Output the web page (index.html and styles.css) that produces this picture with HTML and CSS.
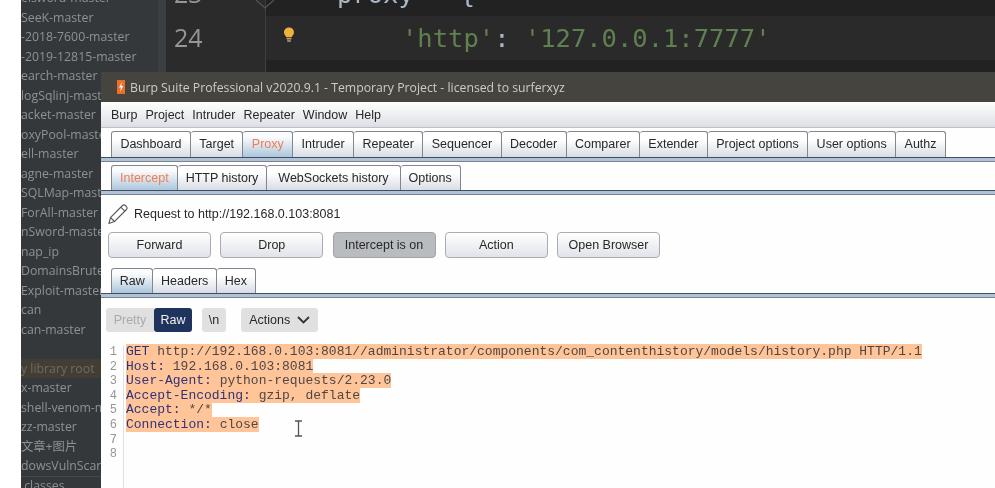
FILE: index.html
```html
<!DOCTYPE html>
<html>
<head>
<meta charset="utf-8">
<title>Burp Suite Professional</title>
<link rel="stylesheet" href="styles.css">
</head>
<body>

<div class='desktop'>
  <div class='ide'>
    <div class='strip'></div>
    <div class='tree'>
      <div class='row'>elsword-master</div>
      <div class='row'>SeeK-master</div>
      <div class='row'>-2018-7600-master</div>
      <div class='row'>-2019-12815-master</div>
      <div class='row'>earch-master</div>
      <div class='row'>logSqlinj-master</div>
      <div class='row'>acket-master</div>
      <div class='row'>oxyPool-master</div>
      <div class='row'>ell-master</div>
      <div class='row'>agne-master</div>
      <div class='row'>SQLMap-master</div>
      <div class='row'>ForAll-master</div>
      <div class='row'>nSword-master</div>
      <div class='row'>nap_ip</div>
      <div class='row'>DomainsBrute</div>
      <div class='row'>Exploit-master</div>
      <div class='row'>can</div>
      <div class='row'>can-master</div>
      <div class='row'></div>
      <div class='row root'>y library root</div>
      <div class='row'>x-master</div>
      <div class='row'>shell-venom-master</div>
      <div class='row'>zz-master</div>
      <div class='row'>文章+图片</div>
      <div class='row sep'>dowsVulnScan</div>
      <div class='row'>.classes</div>
    </div>
    <div class='splitter'></div>
    <div class='gutter'>
      <div class='num'>23</div>
      <div class='num'>24</div>
    </div>
    <div class='code'>
      <div class='line'><span class='var'>proxy = {</span></div>
      <div class='line current'><span class='str'>'http'</span><span class='var'>:</span> <span class='str'>'127.0.0.1:7777'</span></div>
      <div class='line'><span class='var'>}</span></div>
    </div>
  </div>

  <svg class='fold' width='20' height='9' viewBox='0 0 20 9'>
    <path d='M1 0L10 8L19 0' fill='none' stroke='#555' stroke-width='1.2'/>
  </svg>
  <svg class='bulb' width='12' height='16' viewBox='0 0 12 16'>
    <path d='M6 0.5C2.8 0.5 1 2.8 1 5.2C1 7.4 2.6 8.4 3.4 10.2H8.6C9.4 8.4 11 7.4 11 5.2C11 2.8 9.2 0.5 6 0.5Z' fill='#f0b23a'/>
    <path d='M3.6 11.8H8.4M4.2 14H7.8' stroke='#b9a27a' stroke-width='1.4'/>
  </svg>

  <div class='burp'>
    <div class='title'>
      <svg width='8' height='14' viewBox='0 0 8 14'>
        <rect width='8' height='14' fill='#e8702a'/>
        <path d='M5 2L2 7.5H4L3 12L6.2 6H4.2Z' fill='#fff'/>
      </svg>
      <span>Burp Suite Professional v2020.9.1 - Temporary Project - licensed to surferxyz</span>
    </div>
    <div class='menu'>
      <span>Burp</span><span>Project</span><span>Intruder</span><span>Repeater</span><span>Window</span><span>Help</span>
    </div>

    <div class='tabs main'>
      <div class='tab'>Dashboard</div>
      <div class='tab'>Target</div>
      <div class='tab on'>Proxy</div>
      <div class='tab'>Intruder</div>
      <div class='tab'>Repeater</div>
      <div class='tab'>Sequencer</div>
      <div class='tab'>Decoder</div>
      <div class='tab'>Comparer</div>
      <div class='tab'>Extender</div>
      <div class='tab'>Project options</div>
      <div class='tab'>User options</div>
      <div class='tab'>Authz</div>
    </div>
    <div class='tabs sub'>
      <div class='tab on'>Intercept</div>
      <div class='tab'>HTTP history</div>
      <div class='tab ws'>WebSockets history</div>
      <div class='tab'>Options</div>
    </div>

    <div class='request'>
      <svg width='22' height='22' viewBox='0 0 22 22'>
        <path d='M2 20.5L3.5 14.5L15.5 2.5C16.3 1.7 17.5 1.7 18.3 2.5L19.5 3.7C20.3 4.5 20.3 5.7 19.5 6.5L7.5 18.5L2 20.5ZM3.5 14.5L7.5 18.5M13.8 4.2L17.8 8.2' fill='none' stroke='#55585c' stroke-width='1.1'/>
      </svg>
      <span>Request to http://192.168.0.103:8081</span>
    </div>
    <div class='buttons'>
      <div class='btn'>Forward</div>
      <div class='btn'>Drop</div>
      <div class='btn pressed'>Intercept is on</div>
      <div class='btn'>Action</div>
      <div class='btn'>Open Browser</div>
    </div>

    <div class='tabs view'>
      <div class='tab on dark'>Raw</div>
      <div class='tab'>Headers</div>
      <div class='tab'>Hex</div>
    </div>

    <div class='toolbar'>
      <div class='toggle'>
        <div class='pill off'>Pretty</div>
        <div class='pill sel'>Raw</div>
      </div>
      <div class='pill nl'>\n</div>
      <div class='pill act'>Actions
        <svg width='13' height='8' viewBox='0 0 13 8'><path d='M1 1L6.5 6.5L12 1' fill='none' stroke='#333' stroke-width='1.8'/></svg>
      </div>
    </div>

    <div class='editor'>
      <div class='nums'>
        <div>1</div><div>2</div><div>3</div><div>4</div><div>5</div><div>6</div><div>7</div><div>8</div>
      </div>
      <div class='text'>
        <div><mark><b>GET</b> http://192.168.0.103:8081//administrator/components/com_contenthistory/models/history.php HTTP/1.1</mark></div>
        <div><mark><b>Host:</b> 192.168.0.103:8081</mark></div>
        <div><mark><b>User-Agent:</b> python-requests/2.23.0</mark></div>
        <div><mark><b>Accept-Encoding:</b> gzip, deflate</mark></div>
        <div><mark><b>Accept:</b> */*</mark></div>
        <div><mark><b>Connection:</b> close</mark></div>
      </div>
    </div>
  </div>

  <svg class='ibeam' width='9' height='17' viewBox='0 0 9 17'>
    <path d='M1 1H8M4.5 1V16M1 16H8' fill='none' stroke='#555' stroke-width='1.3'/>
  </svg>
</div>

</body>
</html>
```

FILE: styles.css
```css
html, body{
  margin:0px;
  padding:0px;
}
body{
  width:995px;
  height:488px;
  overflow:hidden;
  background:rgb(255,255,255);
}

.desktop{
  position:relative;
  width:995px;
  height:488px;
  overflow:hidden;
  filter:blur(0.5px);
}

/* ide behind the burp window */
.ide{
  display:flex;
  height:488px;
  background:rgb(34,34,34);
}
.strip{
  width:21px;
  background:rgb(255,255,255);
}
.tree{
  width:137px;
  margin-top:-12px;
  overflow:hidden;
  background:rgb(52,56,59);

  font-family:"Open Sans", "Noto Sans CJK SC", sans-serif;
  font-size:12.3px;
  color:rgb(142,146,148);
}
.tree .row{
  height:19.5px;
  line-height:19.5px;
  white-space:nowrap;
}
.tree .root{
  background:rgb(66,62,54);
  color:rgb(112,108,96);
}
.tree .sep{
  border-bottom:1px solid rgb(70,74,76);
  margin-bottom:-1px;
}
.splitter{
  width:8px;
  background:rgb(60,63,65);
}
.gutter{
  width:99px;
  border-right:1px solid rgb(62,62,62);
  margin-top:-29px;
  background:rgb(43,43,43);

  font-family:"Open Sans", sans-serif;
  font-size:25px;
  color:rgb(150,150,150);
}
.gutter .num{
  height:44px;
  line-height:44px;
  padding-left:8px;
}
.code{
  flex:1;
  margin-top:-28px;

  font-family:"DejaVu Sans Mono", monospace;
  font-size:25.5px;
}
.code .line{
  height:44px;
  line-height:44px;
  padding-left:71px;
  white-space:pre;
}
.code .current{
  padding-left:136px;
  background:rgb(42,42,42);
}
.var{
  color:rgb(169,183,198);
}
.str{
  color:rgb(96,128,80);
}
.fold{
  position:absolute;
  left:255px;
  top:0px;
}
.bulb{
  position:absolute;
  left:283px;
  top:27px;
}

/* burp window */
.burp{
  position:absolute;
  left:101px;
  top:72px;
  width:894px;
  height:416px;
  background:rgb(254,254,254);

  font-family:"Liberation Sans", sans-serif;
  font-size:12.5px;
  color:rgb(40,40,40);
}
.title{
  display:flex;
  align-items:center;
  gap:5px;
  height:30px;
  padding-left:16px;
  background:rgb(69,68,63);

  font-family:"Open Sans", sans-serif;
  font-size:12.26px;
  color:rgb(205,205,200);
}
.menu{
  display:flex;
  gap:8px;
  align-items:center;
  height:25px;
  padding-left:10px;
  border-bottom:1px solid rgb(190,192,196);
  background:linear-gradient(rgb(255,255,255), rgb(220,223,228));
}

.tabs{
  display:flex;
  padding-left:10px;
  border-bottom:1px solid rgb(62,78,98);
  box-shadow:0px 3px 0px rgb(176,194,214), 0px 4px 0px rgb(120,130,145);
}
.tab{
  border:1px solid rgb(130,135,142);
  border-bottom:none;
  border-left-width:0px;
  border-radius:3px 3px 0px 0px;
  background:linear-gradient(rgb(255,255,255) 30%, rgb(216,220,228));
  white-space:nowrap;
}
.tab:first-child{
  border-left-width:1px;
}
.tab.on{
  background:linear-gradient(rgb(250,251,252) 20%, rgb(172,198,220));
  color:rgb(240,125,85);
}
.tab.dark{
  color:rgb(40,40,40);
}
.tabs.main{
  height:26px;
  margin-top:3px;
}
.tabs.main .tab{
  line-height:25px;
  padding:0px 8.4px;
}
.tabs.sub{
  height:25px;
  margin-top:7px;
}
.tabs.sub .tab{
  line-height:24px;
  padding:0px 8px;
}
.tabs.sub .tab.ws{
  padding:0px 11px;
}

.request{
  display:flex;
  align-items:center;
  gap:5px;
  height:22px;
  margin-top:12px;
  padding-left:6px;
}
.buttons{
  display:flex;
  gap:9.25px;
  margin-top:7px;
  padding-left:7px;
}
.btn{
  width:101px;
  height:24px;
  line-height:24px;
  text-align:center;
  border:1px solid rgb(170,172,176);
  border-radius:4px;
  background:linear-gradient(rgb(255,255,255), rgb(224,227,232));
}
.btn.pressed{
  background:rgb(184,187,192);
  border-color:rgb(160,163,168);
}

.tabs.view{
  height:25px;
  margin-top:10px;
}
.tabs.view .tab{
  line-height:24px;
  padding:0px 7.7px;
}

.toolbar{
  display:flex;
  align-items:center;
  height:24px;
  margin-top:14px;
  padding-left:5px;
}
.toggle{
  display:flex;
  margin-right:10px;
}
.pill{
  height:24px;
  line-height:24px;
  background:rgb(224,224,224);
  border-radius:3px;
  text-align:center;
}
.pill.off{
  width:48px;
  border-radius:3px 0px 0px 3px;
  color:rgb(170,170,170);
}
.pill.sel{
  width:38px;
  background:rgb(31,52,92);
  color:rgb(240,240,240);
}
.pill.nl{
  width:24px;
  margin-right:15px;
}
.pill.act{
  width:77px;
}
.pill.act svg{
  margin-left:3px;
}

.editor{
  display:flex;
  margin-top:13px;
  height:150px;

  font-family:"Liberation Mono", monospace;
  font-size:13px;
  line-height:14.6px;
  color:rgb(80,70,70);
}
.nums{
  width:23px;
  border-right:1px solid rgb(225,225,225);
  text-align:right;
  padding-right:6px;
  box-sizing:border-box;
  font-size:12px;
  color:rgb(150,150,150);
}
.text{
  padding-left:2px;
}
.text div{
  white-space:pre;
}
.text mark{
  background:rgb(255,197,153);
  color:rgb(80,70,70);
}
.text b{
  font-weight:normal;
  color:rgb(50,50,120);
}
.ibeam{
  position:absolute;
  left:294px;
  top:420px;
}
```
